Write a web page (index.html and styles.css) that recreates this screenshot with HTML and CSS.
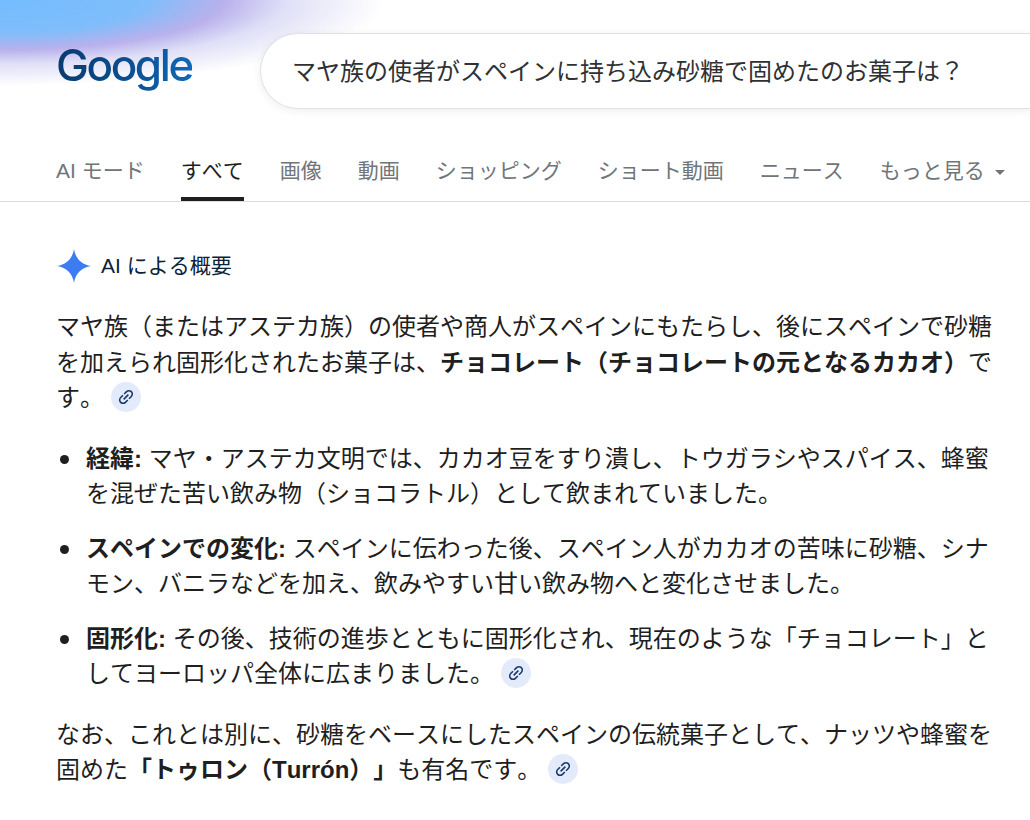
FILE: index.html

```html
<!DOCTYPE html>
<html lang="ja">
<head>
  <meta charset="UTF-8">
  <title>Google 検索</title>
  <link rel="stylesheet" href="styles.css">
</head>
<body>
  <div class="glow"></div>
  <header class="top">
    <div class="logo"><span>Google</span></div>
    <div class="search">マヤ族の使者がスペインに持ち込み砂糖で固めたのお菓子は？</div>
  </header>

  <nav class="tabs">
    <a class="tab">AI モード</a>
    <a class="tab active">すべて</a>
    <a class="tab">画像</a>
    <a class="tab">動画</a>
    <a class="tab">ショッピング</a>
    <a class="tab">ショート動画</a>
    <a class="tab">ニュース</a>
    <a class="tab more">もっと見る<span class="caret"></span></a>
  </nav>

  <main class="overview">
    <div class="ai-head">
      <svg class="spark" viewBox="0 0 36 36"><path d="M18 0C19.500 10 26 16.500 36 18C26 19.500 19.500 26 18 36C16.500 26 10 19.500 0 18C10 16.500 16.500 10 18 0Z"/></svg>
      <span>AI による概要</span>
    </div>

    <p>マヤ族（またはアステカ族）の使者や商人がスペインにもたらし、後にスペインで砂糖を加えられ固形化されたお菓子は、<b>チョコレート（チョコレートの元となるカカオ）</b>です。<span class="chip"><svg viewBox="0 0 24 24"><path d="M3.900 12c0-1.710 1.390-3.100 3.100-3.100h4V7H7c-2.760 0-5 2.240-5 5s2.240 5 5 5h4v-1.900H7c-1.710 0-3.100-1.390-3.100-3.100zM8 13h8v-2H8v2zm9-6h-4v1.900h4c1.710 0 3.100 1.390 3.100 3.100s-1.390 3.100-3.100 3.100h-4V17h4c2.760 0 5-2.240 5-5s-2.240-5-5-5z"/></svg></span></p>

    <ul>
      <li><b>経緯:</b> マヤ・アステカ文明では、カカオ豆をすり潰し、トウガラシやスパイス、蜂蜜を混ぜた苦い飲み物（ショコラトル）として飲まれていました。</li>
      <li><b>スペインでの変化:</b> スペインに伝わった後、スペイン人がカカオの苦味に砂糖、シナモン、バニラなどを加え、飲みやすい甘い飲み物へと変化させました。</li>
      <li><b>固形化:</b> その後、技術の進歩とともに固形化され、現在のような「チョコレート」としてヨーロッパ全体に広まりました。<span class="chip"><svg viewBox="0 0 24 24"><path d="M3.900 12c0-1.710 1.390-3.100 3.100-3.100h4V7H7c-2.760 0-5 2.240-5 5s2.240 5 5 5h4v-1.900H7c-1.710 0-3.100-1.390-3.100-3.100zM8 13h8v-2H8v2zm9-6h-4v1.900h4c1.710 0 3.100 1.390 3.100 3.100s-1.390 3.100-3.100 3.100h-4V17h4c2.760 0 5-2.240 5-5s-2.240-5-5-5z"/></svg></span></li>
    </ul>

    <p>なお、これとは別に、砂糖をベースにしたスペインの伝統菓子として、ナッツや蜂蜜を固めた<b>「トゥロン（Turrón）」</b>も有名です。<span class="chip"><svg viewBox="0 0 24 24"><path d="M3.900 12c0-1.710 1.390-3.100 3.100-3.100h4V7H7c-2.760 0-5 2.240-5 5s2.240 5 5 5h4v-1.900H7c-1.710 0-3.100-1.390-3.100-3.100zM8 13h8v-2H8v2zm9-6h-4v1.900h4c1.710 0 3.100 1.390 3.100 3.100s-1.390 3.100-3.100 3.100h-4V17h4c2.760 0 5-2.240 5-5s-2.240-5-5-5z"/></svg></span></p>
  </main>
</body>
</html>
```

FILE: styles.css

```css
html, body {
  margin: 0;
  height: 820px;
  overflow: hidden;
  background: #fff;
}
body {
  position: relative;
  width: 1030px;
  font-family: "Liberation Sans", "Noto Sans CJK JP", sans-serif;
  font-kerning: none;
  text-spacing-trim: space-all;
  color: #1f1f1f;
}
.glow {
  position: absolute;
  top: 0;
  left: 0;
  width: 420px;
  height: 90px;
  background: radial-gradient(ellipse 385px 86px at 0 0, #74bdff 0%, #7fbdfb 38%, #b9b1ec 58%, #dfdff7 74%, #ffffff 100%);
}
.top {
  position: relative;
  display: flex;
  align-items: center;
  height: 76px;
  padding-top: 33px;
  padding-left: 56px;
}
.logo {
  flex: none;
  width: 204px;
  margin-top: -12px;
  font-family: Inter, sans-serif;
  font-size: 44px;
  font-weight: 500;
  letter-spacing: -2.400px;
}
.logo span {
  color: transparent;
  background: linear-gradient(100deg, #08396c, #0b4f92 55%, #1169b8);
  -webkit-background-clip: text;
  background-clip: text;
}
.search {
  flex: none;
  box-sizing: border-box;
  width: 770px;
  height: 76px;
  padding-left: 31px;
  line-height: 76px;
  font-size: 24px;
  color: #303134;
  background: #fff;
  border: 1px solid #dfe1e5;
  border-right: 0;
  border-radius: 38px 0 0 38px;
  box-shadow: 0 2px 8px rgba(32, 33, 36, 0.08);
}
.tabs {
  display: flex;
  gap: 36px;
  height: 93px;
  box-sizing: border-box;
  padding-left: 56px;
  border-bottom: 1px solid #dadce0;
}
.tab {
  flex: none;
  box-sizing: border-box;
  height: 92px;
  padding-top: 46px;
  font-size: 21px;
  line-height: 31px;
  color: #70757a;
  white-space: nowrap;
}
.tab.active {
  color: #1f1f1f;
  border-bottom: 4px solid #1f1f1f;
}
.caret {
  display: inline-block;
  margin-left: 10px;
  vertical-align: 3px;
  border-top: 5px solid #70757a;
  border-left: 5px solid transparent;
  border-right: 5px solid transparent;
}
.overview {
  width: 938px;
  padding: 0 0 0 56px;
  font-size: 24px;
  line-height: 35.500px;
}
.ai-head {
  display: flex;
  align-items: center;
  gap: 10px;
  height: 36px;
  margin-top: 46px;
  margin-bottom: 7px;
  font-size: 21px;
  color: #0b2239;
}
.spark {
  width: 34px;
  height: 34px;
  margin-left: 1px;
  fill: #3b7cf0;
}
p {
  margin: 25px 0 0;
}
ul {
  margin: 25px 0 0;
  padding: 0 0 0 30px;
  list-style: none;
}
li {
  position: relative;
  margin-bottom: 19px;
}
li::before {
  content: "";
  position: absolute;
  top: 14px;
  left: -26px;
  width: 9px;
  height: 9px;
  background: #1f1f1f;
  border-radius: 50%;
}
b {
  font-weight: 700;
}
.chip {
  display: inline-flex;
  align-items: center;
  justify-content: center;
  width: 30px;
  height: 30px;
  margin-left: 7px;
  vertical-align: -1px;
  background: #e3eafa;
  border-radius: 50%;
}
.chip svg {
  width: 20px;
  height: 20px;
  fill: #1c3a6b;
  transform: rotate(-45deg);
}
```
